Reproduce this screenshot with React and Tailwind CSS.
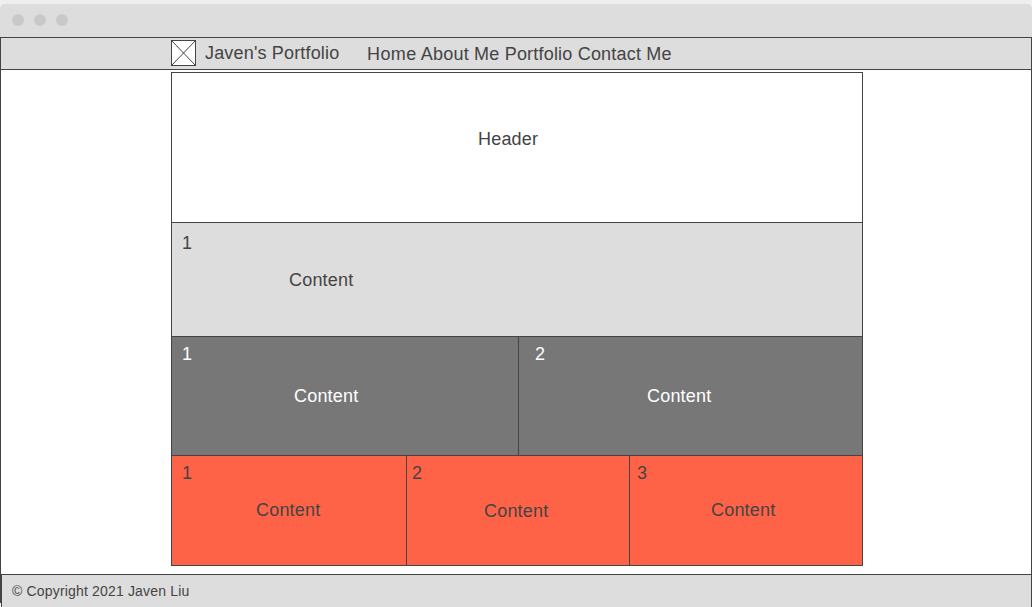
function Cell({ number, label = 'Content', className = '', numberClass = '', labelClass = '' }) {
  return (
    <section className={`flex flex-col items-start border-[#444] ${className}`}>
      <span className={numberClass}>{number}</span>
      <span className={labelClass}>{label}</span>
    </section>
  );
}

function Logo() {
  return (
    <svg width="25" height="26" viewBox="0 0 25 26" className="block" aria-hidden="true">
      <rect x="0.5" y="0.5" width="24" height="25" fill="#fff" stroke="#444" />
      <path d="M0.5 0.5L24.5 25.5M24.5 0.5L0.5 25.5" stroke="#444" fill="none" />
    </svg>
  );
}

export default function App() {
  return (
    <div className="flex h-[607px] w-[1032px] flex-col overflow-hidden bg-[#eee] pt-1 font-['Liberation_Sans',Arial,sans-serif] text-[18px] leading-5 tracking-[0.2px] text-[#444]">
      <div className="flex h-[33px] shrink-0 items-start gap-[10px] rounded-t-[5px] bg-[#ddd] pt-[10px] pl-3">
        <span className="size-3 rounded-full bg-[#c9c9c9]" />
        <span className="size-3 rounded-full bg-[#c9c9c9]" />
        <span className="size-3 rounded-full bg-[#c9c9c9]" />
      </div>

      <nav className="flex h-[33px] shrink-0 items-start border border-[#444] bg-[#ddd] pt-[2px] pl-[170px]">
        <Logo />
        <span className="mt-[3px] ml-[9px] w-[162px] whitespace-nowrap tracking-[0.17px]">Javen's Portfolio</span>
        <span className="mt-1 whitespace-nowrap">
          <span className="tracking-[0.4px]">Home</span> About Me Portfolio Contact Me
        </span>
      </nav>

      <main className="h-[504px] shrink-0 border-x border-[#444] bg-white pt-[2px] pl-[170px]">
        <div className="flex h-[494px] w-[692px] flex-col border border-[#444]">
          <header className="flex h-[150px] items-start border-b border-[#444] pt-14 pl-[306px]">Header</header>
          <Cell number="1" className="h-[114px] border-b bg-[#ddd] pt-[10px]" numberClass="ml-[10px]" labelClass="mt-[17px] ml-[117px]" />
          <div className="flex h-[119px] border-b border-[#444] bg-[#777] text-white">
            <Cell number="1" className="w-[347px] border-r pt-[7px]" numberClass="ml-[10px]" labelClass="mt-[22px] ml-[122px]" />
            <Cell number="2" className="flex-1 pt-[7px]" numberClass="ml-[16px]" labelClass="mt-[22px] ml-[128px]" />
          </div>
          <div className="flex h-[109px] bg-[#ff6347]">
            <Cell number="1" className="w-[235px] border-r pt-[7px]" numberClass="ml-[10px]" labelClass="mt-[17px] ml-[84px]" />
            <Cell number="2" className="w-[223px] border-r pt-[7px]" numberClass="ml-[5px]" labelClass="mt-[18px] ml-[77px]" />
            <Cell number="3" className="flex-1 pt-[7px]" numberClass="ml-[7px]" labelClass="mt-[17px] ml-[81px]" />
          </div>
        </div>
      </main>

      <div className="flex h-[33px] shrink-0 bg-white">
        <span className="h-[29px] w-px bg-[#444]" />
        <footer className="flex-1 border-x border-t border-[#444] bg-[#ddd] pt-2 pl-[10px] text-[14px] leading-4 tracking-[0.17px]">
          © Copyright 2021 Javen Liu
        </footer>
      </div>
    </div>
  );
}
